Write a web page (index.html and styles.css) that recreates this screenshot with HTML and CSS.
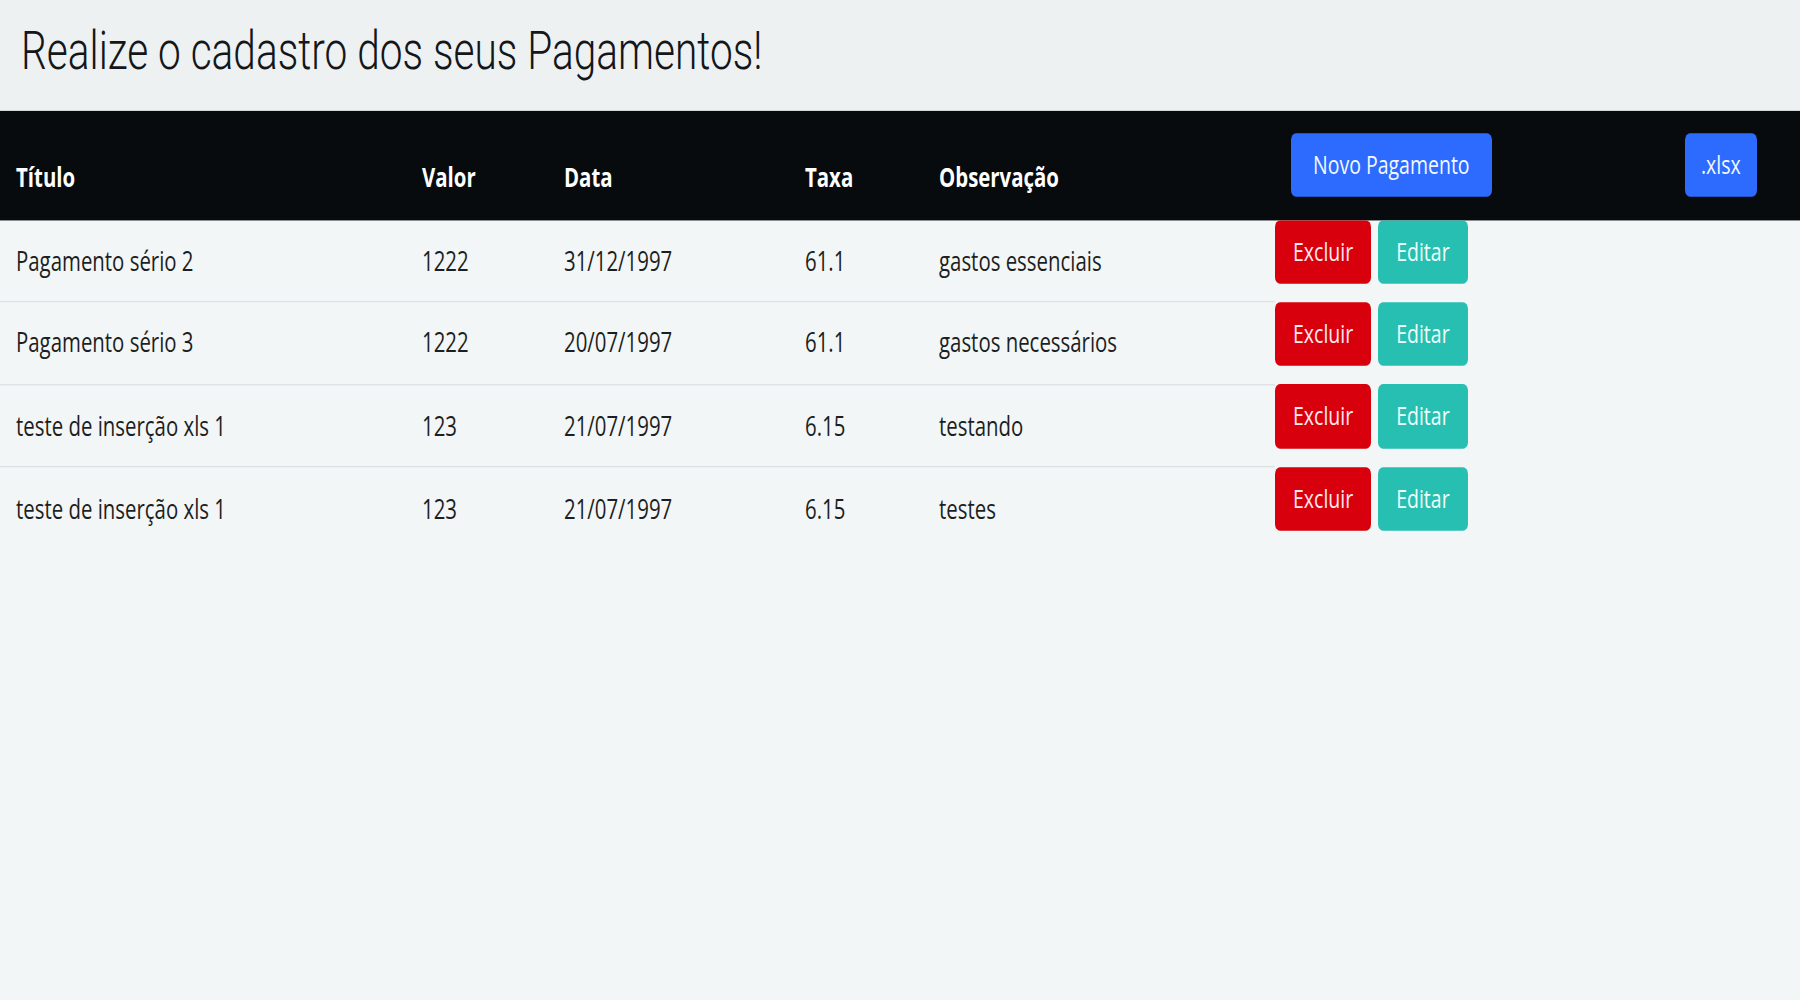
FILE: index.html
```html
<!DOCTYPE html>
<html lang="pt-BR">
<head>
<meta charset="utf-8">
<title>Pagamentos</title>
<link rel="stylesheet" href="styles.css">
</head>
<body>
<div class="page">
  <header class="hero">
    <h1>Realize o cadastro dos seus Pagamentos!</h1>
  </header>
  <table class="pay-table">
    <colgroup>
      <col class="c-titulo">
      <col class="c-valor">
      <col class="c-data">
      <col class="c-taxa">
      <col class="c-obs">
      <col class="c-acoes">
      <col class="c-xlsx">
    </colgroup>
    <thead>
      <tr>
        <th>Título</th>
        <th>Valor</th>
        <th>Data</th>
        <th>Taxa</th>
        <th>Observação</th>
        <th class="th-btn"><button class="btn btn-primary btn-novo">Novo Pagamento</button></th>
        <th class="th-btn"><button class="btn btn-primary btn-xlsx">.xlsx</button></th>
      </tr>
    </thead>
    <tbody>
      <tr>
        <td>Pagamento sério 2</td>
        <td>1222</td>
        <td>31/12/1997</td>
        <td>61.1</td>
        <td>gastos essenciais</td>
        <td class="td-actions"><div class="actions"><button class="btn btn-danger">Excluir</button><button class="btn btn-info">Editar</button></div></td>
      </tr>
      <tr>
        <td>Pagamento sério 3</td>
        <td>1222</td>
        <td>20/07/1997</td>
        <td>61.1</td>
        <td>gastos necessários</td>
        <td class="td-actions"><div class="actions"><button class="btn btn-danger">Excluir</button><button class="btn btn-info">Editar</button></div></td>
      </tr>
      <tr>
        <td>teste de inserção xls 1</td>
        <td>123</td>
        <td>21/07/1997</td>
        <td>6.15</td>
        <td>testando</td>
        <td class="td-actions"><div class="actions"><button class="btn btn-danger">Excluir</button><button class="btn btn-info">Editar</button></div></td>
      </tr>
      <tr>
        <td>teste de inserção xls 1</td>
        <td>123</td>
        <td>21/07/1997</td>
        <td>6.15</td>
        <td>testes</td>
        <td class="td-actions"><div class="actions"><button class="btn btn-danger">Excluir</button><button class="btn btn-info">Editar</button></div></td>
      </tr>
    </tbody>
  </table>
</div>
</body>
</html>
```

FILE: styles.css
```css
html, body {
  margin: 0;
  padding: 0;
}

body {
  min-height: 100vh;
  background: #f3f6f7;
  font-family: "Open Sans", "Noto Sans", sans-serif;
  color: #1c1f22;
}

/* the captured page is stretched vertically */
.page {
  transform: scaleY(1.32);
  transform-origin: 0 0;
}

.hero {
  background: #edf1f2;
  padding: 15px 21px 23px;
}

.hero h1 {
  margin: 0;
  font-family: Roboto, "Liberation Sans", sans-serif;
  font-weight: 300;
  font-size: 40.6px;
  line-height: 46px;
  color: #141619;
}

.pay-table {
  width: 100%;
  border-collapse: collapse;
  table-layout: fixed;
  font-size: 20.4px;
  line-height: 29px;
}

.c-titulo { width: 406px; }
.c-valor { width: 142px; }
.c-data { width: 241px; }
.c-taxa { width: 134px; }
.c-obs { width: 352px; }
.c-acoes { width: 394px; }
.c-xlsx { width: 131px; }

.pay-table th {
  background: #070b0e;
  color: #ffffff;
  font-weight: 700;
  text-align: left;
  vertical-align: bottom;
  padding: 16px 16px 17.5px;
  white-space: nowrap;
}

.pay-table th.th-btn {
  vertical-align: top;
  padding-top: 16.5px;
}

.pay-table td {
  padding: 16.3px 16px;
  border-bottom: 1px solid #dbe3e6;
  vertical-align: middle;
  white-space: nowrap;
}

.pay-table tbody tr:last-child td {
  border-bottom: none;
}

.pay-table td.td-actions {
  padding: 0;
  border-bottom: none;
  vertical-align: top;
}

.actions {
  display: flex;
  gap: 7px;
}

.btn {
  display: block;
  width: max-content;
  border: 0;
  border-radius: 5px;
  padding: 10px 18px;
  font-family: "Open Sans", "Noto Sans", sans-serif;
  font-size: 19.5px;
  line-height: 28.5px;
  font-weight: 400;
  cursor: pointer;
}

.btn-primary {
  background: #2d6bff;
  color: #f2f8ff;
}

.btn-novo {
  padding-left: 22px;
  padding-right: 22px;
}

.btn-xlsx {
  padding-left: 16px;
  padding-right: 16px;
}

.btn-danger {
  background: #d7000c;
  color: #ffe9f1;
}

.btn-info {
  background: #27bfb2;
  color: #effff8;
}
```
